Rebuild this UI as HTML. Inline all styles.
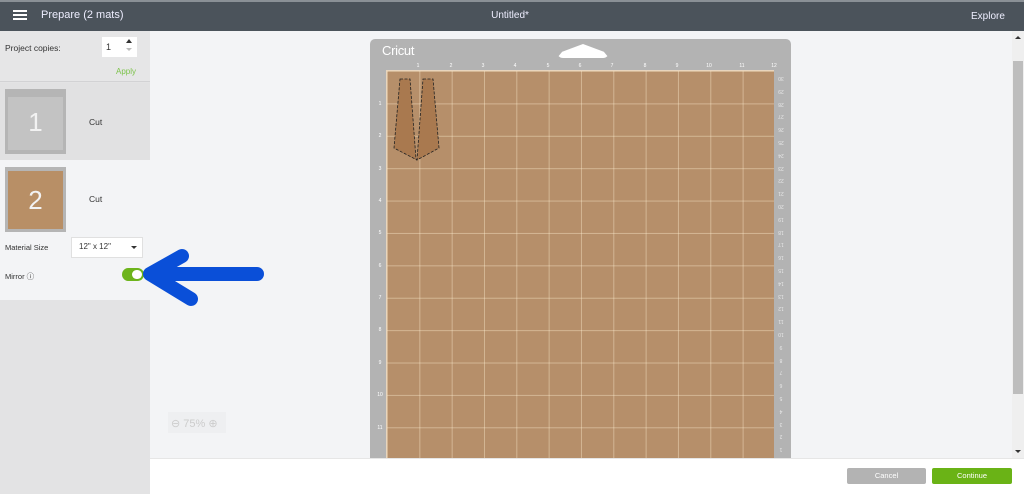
<!DOCTYPE html>
<html><head><meta charset="utf-8"><style>
*{margin:0;padding:0;box-sizing:border-box}
body{width:1024px;height:494px;overflow:hidden;position:relative;background:#f3f4f6;font-family:"Liberation Sans",sans-serif;}
.abs{position:absolute}
</style></head><body>
<div class="abs" style="left:0;top:0;width:1024px;height:31px;background:#4b535b;border-top:2px solid #8a9096"></div>
<div class="abs" style="left:13px;top:10px;width:14px;height:2px;background:#fff;box-shadow:0 4px 0 #fff,0 8px 0 #fff"></div>
<div class="abs" style="left:41px;top:9px;color:#eef;font-size:11px">Prepare (2 mats)</div>
<div class="abs" style="left:490px;top:10px;color:#eef;font-size:10px;width:40px;text-align:center;">Untitled*</div>
<div class="abs" style="left:971px;top:11px;color:#eef;font-size:10px">Explore</div>

<div class="abs" style="left:0;top:31px;width:150px;height:463px;background:#e3e3e4"></div>
<div class="abs" style="left:0;top:31px;width:150px;height:51px;background:#e6e6e7;border-bottom:1px solid #d2d2d4"></div>
<div class="abs" style="left:5px;top:43px;font-size:8.5px;color:#333">Project copies:</div>
<div class="abs" style="left:102px;top:37px;width:35px;height:20px;background:#fff"></div>
<div class="abs" style="left:106px;top:42px;font-size:9px;color:#333">1</div>
<div class="abs" style="left:126px;top:39px;border:3px solid transparent;border-bottom:4px solid #333;border-top:0"></div>
<div class="abs" style="left:126px;top:48px;border:3px solid transparent;border-top:3px solid #bbb;border-bottom:0"></div>
<div class="abs" style="left:116px;top:67px;font-size:8px;color:#7cc34a">Apply</div>
<div class="abs" style="left:0;top:83px;width:150px;height:77px;background:#e1e1e2"></div>
<div class="abs" style="left:0;top:160px;width:150px;height:140px;background:#f3f4f6"></div>
<div class="abs" style="left:5px;top:89px;width:61px;height:65px;background:#b5b5b5"></div>
<div class="abs" style="left:8px;top:97px;width:55px;height:53px;background:#c3c3c3"></div>
<div class="abs" style="left:5px;top:107px;width:61px;text-align:center;font-size:26px;color:#f2f2f2">1</div>
<div class="abs" style="left:89px;top:117px;font-size:8.5px;color:#333">Cut</div>
<div class="abs" style="left:5px;top:167px;width:61px;height:65px;background:#b5b5b5"></div>
<div class="abs" style="left:8px;top:171px;width:55px;height:58px;background:#b88f66"></div>
<div class="abs" style="left:5px;top:185px;width:61px;text-align:center;font-size:26px;color:#f2f2f2">2</div>
<div class="abs" style="left:89px;top:194px;font-size:8.5px;color:#333">Cut</div>
<div class="abs" style="left:5px;top:243px;font-size:7.5px;color:#333">Material Size</div>
<div class="abs" style="left:71px;top:237px;width:72px;height:21px;background:#fff;border:1px solid #e0e0e0"></div>
<div class="abs" style="left:79px;top:242px;font-size:8px;color:#333">12" x 12"</div>
<div class="abs" style="left:131px;top:246px;border:3px solid transparent;border-top:3px solid #333;border-bottom:0"></div>
<div class="abs" style="left:5px;top:271px;font-size:7.5px;color:#333">Mirror ⓘ</div>
<div class="abs" style="left:122px;top:268px;width:22px;height:13px;border-radius:7px;background:#6db41c"></div>
<div class="abs" style="left:132px;top:270px;width:10px;height:9px;border-radius:5px;background:#fff"></div>

<div class="abs" style="left:370px;top:39px;width:421px;height:430px;background:#b3b3b3;border-radius:5px"></div>
<div class="abs" style="left:382px;top:43px;font-size:13px;color:#fff;letter-spacing:-0.3px">Cricut</div>
<div class="abs" style="left:557px;top:44px;width:52px;height:14px;background:#fff;clip-path:polygon(0 100%,10% 55%,50% 0,90% 55%,100% 100%);border-radius:0 0 6px 6px"></div>
<div class="abs" style="left:386px;top:70px;width:388px;height:400px;background-color:#b68f6a;background-image:linear-gradient(to right,rgba(255,240,210,.4) 1px,transparent 1px),linear-gradient(to bottom,rgba(255,240,210,.4) 1px,transparent 1px);background-size:32.33px 32.4px;background-position:0 0;border-left:1px solid #e8d5bd;border-top:1px solid #e8d5bd"></div>
<svg class="abs" style="left:370px;top:39px" width="421" height="420" font-family="Liberation Sans" font-size="5" fill="#fff">
<g text-anchor="middle">
<text x="48" y="28">1</text><text x="81" y="28">2</text><text x="113" y="28">3</text><text x="145" y="28">4</text><text x="178" y="28">5</text><text x="210" y="28">6</text><text x="242" y="28">7</text><text x="275" y="28">8</text><text x="307" y="28">9</text><text x="339" y="28">10</text><text x="372" y="28">11</text><text x="404" y="28">12</text>
<text x="10" y="66">1</text><text x="10" y="98">2</text><text x="10" y="131">3</text><text x="10" y="163">4</text><text x="10" y="195">5</text><text x="10" y="228">6</text><text x="10" y="260">7</text><text x="10" y="292">8</text><text x="10" y="325">9</text><text x="10" y="357">10</text><text x="10" y="390">11</text>
</g>
<g fill="#e8e8e8" font-size="5" text-anchor="middle">
<text transform="translate(411,38) rotate(180)">30</text><text transform="translate(411,51) rotate(180)">29</text><text transform="translate(411,64) rotate(180)">28</text><text transform="translate(411,76) rotate(180)">27</text><text transform="translate(411,89) rotate(180)">26</text><text transform="translate(411,102) rotate(180)">25</text><text transform="translate(411,115) rotate(180)">24</text><text transform="translate(411,128) rotate(180)">23</text><text transform="translate(411,140) rotate(180)">22</text><text transform="translate(411,153) rotate(180)">21</text><text transform="translate(411,166) rotate(180)">20</text><text transform="translate(411,179) rotate(180)">19</text><text transform="translate(411,192) rotate(180)">18</text><text transform="translate(411,204) rotate(180)">17</text><text transform="translate(411,217) rotate(180)">16</text><text transform="translate(411,230) rotate(180)">15</text><text transform="translate(411,243) rotate(180)">14</text><text transform="translate(411,256) rotate(180)">13</text><text transform="translate(411,268) rotate(180)">12</text><text transform="translate(411,281) rotate(180)">11</text><text transform="translate(411,294) rotate(180)">10</text><text transform="translate(411,307) rotate(180)">9</text><text transform="translate(411,320) rotate(180)">8</text><text transform="translate(411,332) rotate(180)">7</text><text transform="translate(411,345) rotate(180)">6</text><text transform="translate(411,358) rotate(180)">5</text><text transform="translate(411,371) rotate(180)">4</text><text transform="translate(411,384) rotate(180)">3</text><text transform="translate(411,396) rotate(180)">2</text><text transform="translate(411,409) rotate(180)">1</text>
</g>
<path d="M30 40L40 40L46 120L47 121L24 109Z" fill="#a9794f" stroke="#222" stroke-width="0.8" stroke-dasharray="3 1.5"/>
<path d="M53 40L63 40L69 109L47 121Z" fill="#a9794f" stroke="#222" stroke-width="0.8" stroke-dasharray="3 1.5"/>
</svg>

<div class="abs" style="left:1012px;top:31px;width:12px;height:427px;background:#efefef"></div>
<div class="abs" style="left:1013px;top:61px;width:10px;height:333px;background:#bdbdbd"></div>
<div class="abs" style="left:1015px;top:36px;border:3px solid transparent;border-bottom:3px solid #333;border-top:0"></div>
<div class="abs" style="left:1015px;top:450px;border:3px solid transparent;border-top:3px solid #333;border-bottom:0"></div>

<div class="abs" style="left:168px;top:412px;width:58px;height:21px;background:#eeeff1"></div>
<div class="abs" style="left:171px;top:417px;font-size:11px;color:#ccc">⊖ 75% ⊕</div>

<div class="abs" style="left:150px;top:458px;width:874px;height:36px;background:#fff;border-top:1px solid #e6e6e6"></div>
<div class="abs" style="left:847px;top:468px;width:79px;height:16px;background:#b3b3b3;border-radius:2px;color:#fff;font-size:7.5px;text-align:center;line-height:16px">Cancel</div>
<div class="abs" style="left:932px;top:468px;width:80px;height:16px;background:#6ab316;border-radius:2px;color:#fff;font-size:7.5px;text-align:center;line-height:16px">Continue</div>

<svg class="abs" style="left:0;top:0" width="1024" height="494"><path d="M257 274L150 274M182 256L150 274L191 299" fill="none" stroke="#0a4fd8" stroke-width="14" stroke-linecap="round" stroke-linejoin="round"/></svg>
</body></html>
